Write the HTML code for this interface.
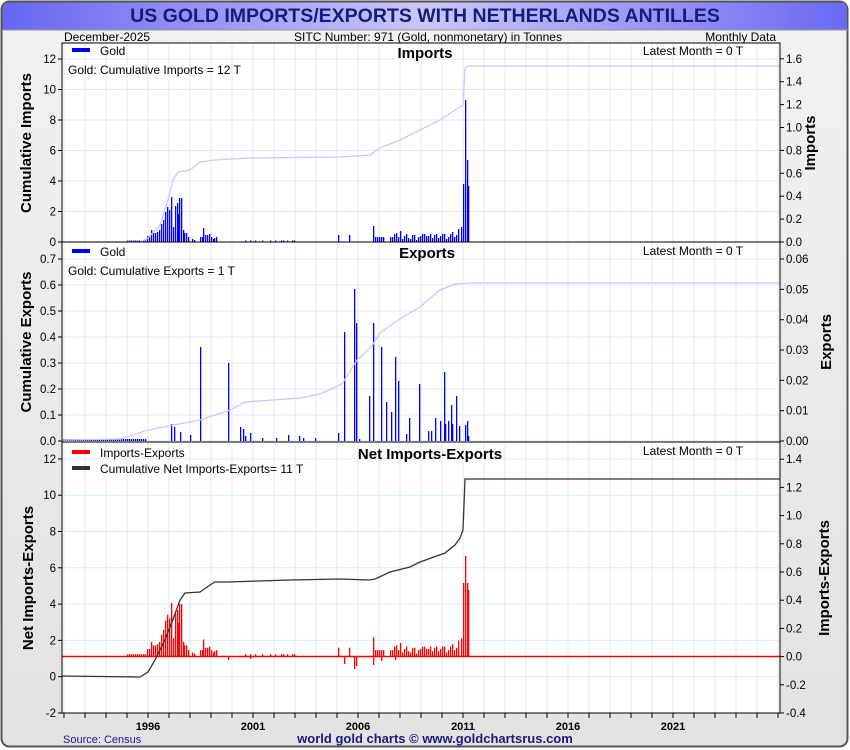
<!DOCTYPE html>
<html><head><meta charset="utf-8"><style>
html,body{margin:0;padding:0;background:#fff;}
svg{display:block;font-family:"Liberation Sans",sans-serif;}
</style></head><body>
<svg id="s" width="850" height="750" xmlns="http://www.w3.org/2000/svg">
<defs>
<linearGradient id="tg" x1="0" x2="1" y1="0" y2="0"><stop offset="0" stop-color="#6666f0"/><stop offset="0.5" stop-color="#c8c8f8"/><stop offset="1" stop-color="#6a6af2"/></linearGradient>
<linearGradient id="bg" x1="0" x2="0" y1="0" y2="1"><stop offset="0" stop-color="#f2f2f2"/><stop offset="1" stop-color="#e2e2e2"/></linearGradient>
</defs>
<rect x="1.5" y="1.5" width="846" height="745" rx="8" fill="url(#bg)" stroke="#555" stroke-width="2"/>
<path d="M2.5 30 V10 Q2.5 2.5 10 2.5 H840 Q847 2.5 847 10 V30 Z" fill="url(#tg)"/>
<line x1="2" y1="30" x2="848" y2="30" stroke="#999"/>
<text x="425" y="22" text-anchor="middle" font-size="19.5" font-weight="bold" fill="#1a1a7a">US GOLD IMPORTS/EXPORTS WITH NETHERLANDS ANTILLES</text>
<text x="64" y="41" font-size="12">December-2025</text>
<text x="428" y="41" font-size="12" text-anchor="middle">SITC Number: 971 (Gold, nonmonetary) in Tonnes</text>
<text x="776" y="41" font-size="12" text-anchor="end">Monthly Data</text>
<rect x="62" y="43" width="718" height="670" fill="#fff"/>
<g id="grid"></g>
<g id="data"></g>
<rect x="62" y="43" width="718" height="670" fill="none" stroke="#000" stroke-width="1"/>
<line x1="62" y1="242" x2="780" y2="242" stroke="#000"/>
<line x1="62" y1="442" x2="780" y2="442" stroke="#000"/>
<g id="ax" font-size="11.5"></g>
<g font-size="12">
<rect x="72" y="48" width="18" height="4" fill="#00f"/><text x="100" y="55">Gold</text>
<text x="68" y="74">Gold: Cumulative Imports = 12 T</text>
<text x="425" y="58" text-anchor="middle" font-size="15" font-weight="bold">Imports</text>
<text x="693" y="55" text-anchor="middle">Latest Month = 0 T</text>
<rect x="72" y="249" width="18" height="4" fill="#00f"/><text x="100" y="256">Gold</text>
<text x="68" y="275">Gold: Cumulative Exports = 1 T</text>
<text x="427" y="258" text-anchor="middle" font-size="15" font-weight="bold">Exports</text>
<text x="693" y="255" text-anchor="middle">Latest Month = 0 T</text>
<rect x="72" y="450" width="18" height="4" fill="#f00"/><text x="100" y="457">Imports-Exports</text>
<rect x="72" y="466" width="18" height="4" fill="#333"/><text x="100" y="473">Cumulative Net Imports-Exports= 11 T</text>
<text x="430" y="459" text-anchor="middle" font-size="15" font-weight="bold">Net Imports-Exports</text>
<text x="693" y="455" text-anchor="middle">Latest Month = 0 T</text>
</g>
<g font-size="15" font-weight="bold">
<text transform="translate(31 143) rotate(-90)" text-anchor="middle">Cumulative Imports</text>
<text transform="translate(31 342) rotate(-90)" text-anchor="middle">Cumulative Exports</text>
<text transform="translate(33 578) rotate(-90)" text-anchor="middle">Net Imports-Exports</text>
<text transform="translate(815 143) rotate(-90)" text-anchor="middle">Imports</text>
<text transform="translate(831 342) rotate(-90)" text-anchor="middle">Exports</text>
<text transform="translate(829 578) rotate(-90)" text-anchor="middle">Imports-Exports</text>
</g>
<text x="63" y="743" font-size="11" fill="#1a1a9a">Source: Census</text>
<text x="435" y="743" font-size="13" font-weight="bold" fill="#1a1a7a" text-anchor="middle">world gold charts © www.goldchartsrus.com</text>
</svg>
<script>
var NS="http://www.w3.org/2000/svg";
function el(p,t,a,txt){var e=document.createElementNS(NS,t);for(var k in a)e.setAttribute(k,a[k]);if(txt!=null)e.textContent=txt;document.getElementById(p).appendChild(e);return e;}
var G="#dcebf5";
for(var y=1992;y<=2026;y++){var x=148+(y-1996)*21;if(x>62&&x<780)el("grid","line",{x1:x,x2:x,y1:43,y2:713,stroke:G});}
function hax(vals,y0,dy,x,anchor,fmt,grid){vals.forEach(function(v,i){var yy=y0-i*dy;if(grid)el("grid","line",{x1:62,x2:780,y1:yy,y2:yy,stroke:G});
el("ax","line",{x1:anchor=="end"?x-4:x,x2:anchor=="end"?x:x+4,y1:yy,y2:yy,stroke:"#000"});
el("ax","text",{x:anchor=="end"?x-6:x+6,y:yy+4,"text-anchor":anchor},fmt(v));});}
hax([0,2,4,6,8,10,12],242,30.5,62,"end",String,true);
hax([0,.2,.4,.6,.8,1,1.2,1.4,1.6],242,22.9,780,"start",function(v){return v.toFixed(1)},false);
hax([0,.1,.2,.3,.4,.5,.6,.7],441,26,62,"end",function(v){return v==0?"0.0":v.toFixed(1)},true);
hax([0,.01,.02,.03,.04,.05,.06],441,30.33,780,"start",function(v){return v.toFixed(2)},false);
hax([-2,0,2,4,6,8,10,12],713,36.3,62,"end",String,true);
hax([-.4,-.2,0,.2,.4,.6,.8,1,1.2,1.4],713,28.2,780,"start",function(v){return v.toFixed(1)},false);
for(var y=1992;y<=2026;y++){var x=148+(y-1996)*21;if(x>=62&&x<=780)el("ax","line",{x1:x,x2:x,y1:713,y2:718,stroke:"#000"});}
[1996,2001,2006,2011,2016,2021].forEach(function(y){el("ax","text",{x:148+(y-1996)*21,y:730,"text-anchor":"middle","font-weight":"bold","font-size":"11"},y);});
var imp=[[147,6],[149,6],[151,12],[153,9],[155,9],[157,10],[159,12],[161,18],[163,22],[165,30],[167,35],[169,32],[171,45],[173,15],[175,36],[177,39],[178,28],[179,44],[181,44],[183,12],[184,9],[186,9],[188,5],[192,3],[194,2],[200,5],[202,5],[203,14],[205,7],[207,7],[209,8],[211,5],[213,3],[214,4],[216,5],[338,7],[349,7],[373,16],[375,5],[377,5],[379,5],[381,5],[383,5],[390,5],[392,5],[394,8],[396,9],[398,5],[400,11],[402,3],[404,6],[406,8],[408,4],[410,3],[412,7],[414,7],[416,2],[418,5],[420,6],[422,8],[424,8],[426,6],[428,6],[430,8],[432,4],[434,7],[436,8],[438,4],[440,6],[442,8],[444,8],[446,3],[448,5],[450,8],[452,10],[454,5],[456,7],[458,13],[461,15],[463,58],[465,142],[467,82],[468,56]];
for(var x=127;x<146;x+=2)imp.push([x,1.5]);
[245,250,255,262,270,275,281,283,287,292,294].forEach(function(x){imp.push([x,1.5]);});
imp.forEach(function(b){el("data","rect",{x:b[0],y:242-b[1],width:1.3,height:b[1],fill:"#00f"});});
el("data","polyline",{points:"62,242 140,242 148,238 160,225 168,200 173,180 178,172 190,170 200,162 215,160 250,158 340,157 370,155 380,148 400,140 420,130 440,120 455,110 463,105 465,68 468,66 780,66",fill:"none",stroke:"#c8c8ff","stroke-width":1.3});
var exp=[[171,17],[174,14],[180,9],[190,6],[200,94],[228,78],[240,14],[243,12],[245,5],[250,8],[262,3],[276,3],[288,6],[299,5],[303,3],[315,3],[338,8],[344,109],[354,152],[356,118],[359,2],[369,45],[373,118],[381,94],[386,39],[391,29],[395,84],[398,60],[406,7],[409,23],[419,57],[428,10],[431,10],[435,23],[440,20],[444,69],[445,17],[448,20],[451,36],[452,17],[456,45],[459,15],[465,16],[467,20],[468,5]];
for(var x=63;x<146;x+=2)exp.push([x,2]);
exp.forEach(function(b){el("data","rect",{x:b[0],y:441-b[1],width:1.3,height:b[1],fill:"#00f"});});
el("data","polyline",{points:"62,440 120,439 148,430 200,420 230,410 245,402 300,398 320,394 342,384 357,360 372,346 380,333 398,320 420,307 440,290 455,284 470,283 780,283",fill:"none",stroke:"#c8c8ff","stroke-width":1.3});
var big={463:73,465:100,467:73,468:66};
imp.forEach(function(b){var h=big[b[0]]||b[1]*1.18;el("data","rect",{x:b[0],y:656-h,width:1.3,height:h,fill:"#f00"});});
[[228,4],[344,8],[354,13],[356,10],[373,9],[381,5],[395,4],[250,3]].forEach(function(b){el("data","rect",{x:b[0],y:656,width:1.3,height:b[1],fill:"#f00"});});
el("data","line",{x1:62,x2:780,y1:656.5,y2:656.5,stroke:"#f00","stroke-width":1.5});
el("data","polyline",{points:"62,676 140,677 148,672 155,660 165,640 172,622 180,600 185,593 200,592 210,585 215,582 227,582 290,580 340,579 370,580 375,579 390,572 410,567 420,562 445,553 455,545 460,538 463,530 465,479 468,479 780,479",fill:"none",stroke:"#333","stroke-width":1.3});
</script>
</body></html>
